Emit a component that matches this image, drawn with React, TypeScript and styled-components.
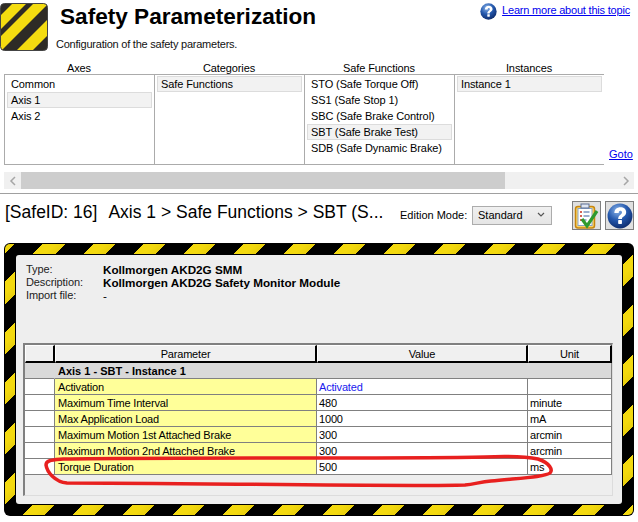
import React from "react";
import styled, { createGlobalStyle } from "styled-components";

const Global = createGlobalStyle`
  html, body { margin: 0; padding: 0; background: #fff; }
  body { font-family: "Liberation Sans", Arial, sans-serif; color: #000; }
  * { box-sizing: border-box; }
`;

const Page = styled.div`
  position: relative;
  width: 638px;
  height: 522px;
  overflow: hidden;
  background: #fff;
`;

const Header = styled.header`
  display: flex;
  height: 61px;
  padding-top: 3px;
`;

const TitleBlock = styled.div`
  flex: 1;
  margin-left: 8px;
`;

const Title = styled.h1`
  margin: 1px 0 0 4px;
  font-size: 22.6px;
  line-height: 25px;
  font-weight: 700;
`;

const Subtitle = styled.p`
  margin: 8px 0 0;
  font-size: 11px;
  letter-spacing: -0.23px;
  line-height: 14px;
  color: #111;
`;

const TopicLink = styled.a`
  display: flex;
  align-items: flex-start;
  gap: 5px;
  padding-right: 8px;
  font-size: 11px;
  letter-spacing: -0.2px;
  line-height: 14px;
  color: #0000ee;
  text-decoration: underline;
`;

const Selector = styled.section`
  display: flex;
  padding-left: 4px;
  align-items: flex-end;
  height: 104px;
`;

const SelectorColumn = styled.div`
  width: 150px;
`;

const ColumnLabel = styled.div`
  height: 14px;
  font-size: 11px;
  line-height: 14px;
  text-align: center;
  margin-bottom: -1px;
  letter-spacing: -0.1px;
`;

const ListBox = styled.ul`
  list-style: none;
  margin: 0;
  height: 91px;
  padding: 1px 2px;
  border: 1px solid #ababab;
  border-right-width: 0;
  background: #fff;
  ${SelectorColumn}:last-child & { border-right-width: 1px; width: 150px; }
`;

const ListItem = styled.li<{ $selected?: boolean }>`
  height: 16px;
  font-size: 11px;
  letter-spacing: -0.1px;
  line-height: 15px;
  white-space: nowrap;
  background: ${(p) => (p.$selected ? "#f2f2f2" : "transparent")};
  border: ${(p) => (p.$selected ? "1px solid #dcdcdc" : "0")};
  padding: ${(p) => (p.$selected ? "0 0 0 3px" : "1px 0 0 4px")};
`;

const GotoLink = styled.a`
  margin-left: 5px;
  font-size: 11px;
  line-height: 14px;
  margin-bottom: 4px;
  color: #0000ee;
  text-decoration: underline;
`;

const ScrollBar = styled.div`
  display: flex;
  align-items: center;
  height: 17px;
  margin: 7px 4px 0 4px;
  background: #f0f0f0;
`;

const ScrollArrow = styled.div`
  width: 17px;
  height: 17px;
  display: flex;
  align-items: center;
  justify-content: center;
`;

const ScrollThumb = styled.div`
  width: 484px;
  height: 17px;
  background: #cdcdcd;
`;

const ScrollTrack = styled.div`
  flex: 1;
`;

const Divider = styled.div`
  height: 1px;
  margin-top: 4px;
  background: #a0a0a0;
`;

const Toolbar = styled.div`
  display: flex;
  align-items: flex-start;
  height: 49px;
  padding: 7px 4px 0 5px;
`;

const Breadcrumb = styled.div`
  display: flex;
  width: 382px;
  flex: none;
  font-size: 17.5px;
  white-space: nowrap;
  line-height: 22px;
`;

const SafeId = styled.span`
  margin-right: 11px;
`;

const ModeLabel = styled.span`
  margin: 7px 0 0 13px;
  font-size: 11px;
  line-height: 14px;
  white-space: nowrap;
  width: 67px;
  flex: none;
`;

const ModeSelect = styled.div`
  display: flex;
  flex: none;
  align-items: center;
  justify-content: space-between;
  width: 80px;
  height: 19px;
  margin: 5px 0 0 5px;
  padding: 0 6px 1px 5px;
  border: 1px solid #acacac;
  background: linear-gradient(#f0f0f0, #e5e5e5);
  font-size: 11px;
`;

const ToolButton = styled.button`
  display: flex;
  flex: none;
  align-items: center;
  justify-content: center;
  width: 29px;
  height: 29px;
  padding: 0;
  margin-left: 20px;
  background: #e0e0e0;
  border: 1px solid #7f7f7f;
  & + & { margin-left: 4px; }
`;

const HazardFrame = styled.section`
  height: 273px;
  margin: 0 4px;
  padding: 1px;
  background: #000;
  border-radius: 6px;
`;

const HazardStripes = styled.div`
  height: 100%;
  padding: 11px;
  border-radius: 5px;
  background: repeating-linear-gradient(
    135deg,
    #f3d90f 0,
    #e9cf0c 7.07px,
    #000 7.07px,
    #000 26.87px,
    #f3d90f 26.87px,
    #f3d90f 35.36px
  );
`;

const InnerPanel = styled.div`
  height: 100%;
  padding: 8px 0 0 7px;
  background: #eeeeee;
  border-radius: 3px;
  box-shadow: 0 0 0 1px #000;
`;

const InfoGrid = styled.dl`
  display: grid;
  grid-template-columns: 77px 1fr;
  grid-auto-rows: 13px;
  margin: 0 0 0 3px;
  height: 80px;
  line-height: 13px;
`;

const InfoLabel = styled.dt`
  color: #222;
  font-size: 11px;
  letter-spacing: -0.1px;
`;

const InfoValue = styled.dd<{ $plain?: boolean }>`
  margin: 0;
  font-weight: ${(p) => (p.$plain ? 400 : 700)};
  font-size: 11.7px;
`;

const GridFrame = styled.div`
  height: 153px;
  width: 590px;
  border: 2px solid #808080;
  border-right: 1px solid #dcdcdc;
  border-bottom: 1px solid #dcdcdc;
  background: #eeeeee;
`;

const Table = styled.table`
  border-collapse: separate;
  border-spacing: 0;
  table-layout: fixed;
  width: 587px;
  font-size: 11px;
  letter-spacing: -0.18px;
`;

const HeaderCell = styled.th`
  height: 18px;
  padding: 0;
  font-weight: 400;
  font-size: 11px;
  text-align: center;
  background: #f0f0f0;
  border-top: 1px solid #fff;
  border-left: 1px solid #fff;
  border-right: 2px solid #000;
  border-bottom: 2px solid #000;
`;

const GroupCell = styled.td`
  height: 16px;
  padding: 0 0 0 3px;
  font-weight: 700;
  letter-spacing: 0;
  background: #d9d9d9;
  border-bottom: 1px solid #808080;
  border-right: 1px solid #808080;
  &:first-child { border-right-color: #d9d9d9; }
`;

const GutterCell = styled.td`
  height: 16px;
  background: #fff;
  border-bottom: 1px solid #808080;
  border-right: 1px solid #808080;
`;

const NameCell = styled.td`
  height: 16px;
  padding: 0 0 0 3px;
  background: #ffff99;
  border-bottom: 1px solid #808080;
  border-right: 1px solid #808080;
  white-space: nowrap;
`;

const DataCell = styled.td<{ $link?: boolean }>`
  height: 16px;
  padding: 0 0 0 2px;
  background: #fff;
  color: ${(p) => (p.$link ? "#1a1aee" : "#000")};
  border-bottom: 1px solid #808080;
  border-right: 1px solid #808080;
`;

const Annotation = styled.svg`
  position: absolute;
  left: 0;
  top: 0;
  pointer-events: none;
`;

const HelpDisc = ({ size }: { size: number }) => (
  <svg width={size} height={size} viewBox="0 0 24 24">
    <defs>
      <radialGradient id={`disc${size}`} cx="40%" cy="28%" r="78%">
        <stop offset="0" stopColor="#8ab4ea" />
        <stop offset="0.5" stopColor="#2458ad" />
        <stop offset="1" stopColor="#0b2766" />
      </radialGradient>
    </defs>
    <circle cx="12" cy="12" r="11.5" fill={`url(#disc${size})`} />
    <path
      d="M6.800 9.300C6.800 5.900 9.300 4 12.400 4c3.100 0 5.300 1.800 5.300 4.500 0 3.800-3.900 3.700-3.900 6.200H10.300c0-3.700 3.500-4 3.500-6 0-.9-.6-1.500-1.500-1.500-1 0-1.500.8-1.500 2.100z"
      fill="#fff"
    />
    <rect x="10.300" y="15.800" width="3.500" height="3.500" rx=".6" fill="#fff" />
  </svg>
);

const rows = [
  ["Activation", "Activated", ""],
  ["Maximum Time Interval", "480", "minute"],
  ["Max Application Load", "1000", "mA"],
  ["Maximum Motion 1st Attached Brake", "300", "arcmin"],
  ["Maximum Motion 2nd Attached Brake", "300", "arcmin"],
  ["Torque Duration", "500", "ms"],
];

const columns = [
  { label: "Axes", items: ["Common", "Axis 1", "Axis 2"], selected: "Axis 1" },
  { label: "Categories", items: ["Safe Functions"], selected: "Safe Functions" },
  {
    label: "Safe Functions",
    items: [
      "STO (Safe Torque Off)",
      "SS1 (Safe Stop 1)",
      "SBC (Safe Brake Control)",
      "SBT (Safe Brake Test)",
      "SDB (Safe Dynamic Brake)",
    ],
    selected: "SBT (Safe Brake Test)",
  },
  { label: "Instances", items: ["Instance 1"], selected: "Instance 1" },
];

export default function App() {
  return (
    <Page>
      <Global />
      <Header>
        <svg width="48" height="48" viewBox="0 0 48 48">
          <defs>
            <clipPath id="logoClip">
              <rect x="0.500" y="0.500" width="47" height="47" rx="4" />
            </clipPath>
          </defs>
          <g clipPath="url(#logoClip)">
            <rect width="48" height="48" fill="#2e2b26" />
            <path d="M0 13 L13 0 H27 L0 27Z" fill="#f4dc10" />
            <path d="M0 49 L49 0 H34 L0 34Z" fill="#f4dc10" />
            <path d="M16 48 L48 16 V32 L32 48Z" fill="#f4dc10" />
          </g>
          <rect x="0.500" y="0.500" width="47" height="47" rx="4" fill="none" stroke="#444" />
        </svg>
        <TitleBlock>
          <Title>Safety Parameterization</Title>
          <Subtitle>Configuration of the safety parameters.</Subtitle>
        </TitleBlock>
        <TopicLink href="#">
          <HelpDisc size={17} />
          Learn more about this topic
        </TopicLink>
      </Header>

      <Selector>
        {columns.map((c) => (
          <SelectorColumn key={c.label}>
            <ColumnLabel>{c.label}</ColumnLabel>
            <ListBox>
              {c.items.map((i) => (
                <ListItem key={i} $selected={i === c.selected}>
                  {i}
                </ListItem>
              ))}
            </ListBox>
          </SelectorColumn>
        ))}
        <GotoLink href="#">Goto</GotoLink>
      </Selector>

      <ScrollBar>
        <ScrollArrow>
          <svg width="8" height="10" viewBox="0 0 8 10">
            <path d="M6 1 L2 5 L6 9" fill="none" stroke="#a6a6a6" strokeWidth="1.500" />
          </svg>
        </ScrollArrow>
        <ScrollThumb />
        <ScrollTrack />
        <ScrollArrow>
          <svg width="8" height="10" viewBox="0 0 8 10">
            <path d="M2 1 L6 5 L2 9" fill="none" stroke="#a6a6a6" strokeWidth="1.500" />
          </svg>
        </ScrollArrow>
      </ScrollBar>
      <Divider />

      <Toolbar>
        <Breadcrumb>
          <SafeId>[SafeID: 16]</SafeId>
          {"Axis 1 > Safe Functions > SBT (S..."}
        </Breadcrumb>
        <ModeLabel>Edition Mode:</ModeLabel>
        <ModeSelect>
          Standard
          <svg width="8" height="6" viewBox="0 0 8 6">
            <path d="M1 1 L4 4 L7 1" fill="none" stroke="#555" strokeWidth="1.200" />
          </svg>
        </ModeSelect>
        <ToolButton>
          <svg width="25" height="26" viewBox="0 0 25 26">
            <rect x="1.500" y="3.500" width="19" height="21.500" rx="2.500" fill="#f8d46a" stroke="#c8860f" strokeWidth="1.500" />
            <rect x="4" y="5.500" width="14" height="17" fill="#fff" stroke="#8aa4c8" />
            <rect x="7" y="1" width="8" height="4" fill="#dfe6f2" stroke="#5a6d92" />
            <path d="M6 9h2M6 13h2M6 17h2" stroke="#c8301e" strokeWidth="1.500" />
            <path d="M9.500 9h6M9.500 13h6M9.500 17h3" stroke="#3a5fa0" strokeWidth="1.200" />
            <path d="M8 16 L13 23 L23 8" fill="none" stroke="#2f9a2e" strokeWidth="3.200" />
          </svg>
        </ToolButton>
        <ToolButton>
          <HelpDisc size={26} />
        </ToolButton>
      </Toolbar>

      <HazardFrame>
        <HazardStripes>
          <InnerPanel>
            <InfoGrid>
              <InfoLabel>Type:</InfoLabel>
              <InfoValue>Kollmorgen AKD2G SMM</InfoValue>
              <InfoLabel>Description:</InfoLabel>
              <InfoValue>Kollmorgen AKD2G Safety Monitor Module</InfoValue>
              <InfoLabel>Import file:</InfoLabel>
              <InfoValue $plain>-</InfoValue>
            </InfoGrid>
            <GridFrame>
              <Table>
                <colgroup>
                  <col width="30" />
                  <col width="262" />
                  <col width="211" />
                  <col width="84" />
                </colgroup>
                <thead>
                  <tr>
                    <HeaderCell />
                    <HeaderCell>Parameter</HeaderCell>
                    <HeaderCell>Value</HeaderCell>
                    <HeaderCell>Unit</HeaderCell>
                  </tr>
                </thead>
                <tbody>
                  <tr>
                    <GroupCell />
                    <GroupCell colSpan={3}>Axis 1 - SBT - Instance 1</GroupCell>
                  </tr>
                  {rows.map(([name, value, unit], i) => (
                    <tr key={name}>
                      <GutterCell />
                      <NameCell>{name}</NameCell>
                      <DataCell $link={i === 0}>{value}</DataCell>
                      <DataCell>{unit}</DataCell>
                    </tr>
                  ))}
                </tbody>
              </Table>
            </GridFrame>
          </InnerPanel>
        </HazardStripes>
      </HazardFrame>

      <Annotation width="638" height="522" viewBox="0 0 638 522">
        <path
          d="M63 459 C200 457 400 459 485 457 C510 456 528 457 538 459 C550 463 553 470 550 473 C545 477 520 478 491 481 C480 482 475 484 465 485 C400 487 200 483 67 483 C55 482 47 472 46 465 C46 460 52 460 63 459"
          fill="none"
          stroke="#e8201f"
          strokeWidth="3.500"
          strokeLinecap="round"
        />
      </Annotation>
    </Page>
  );
}
